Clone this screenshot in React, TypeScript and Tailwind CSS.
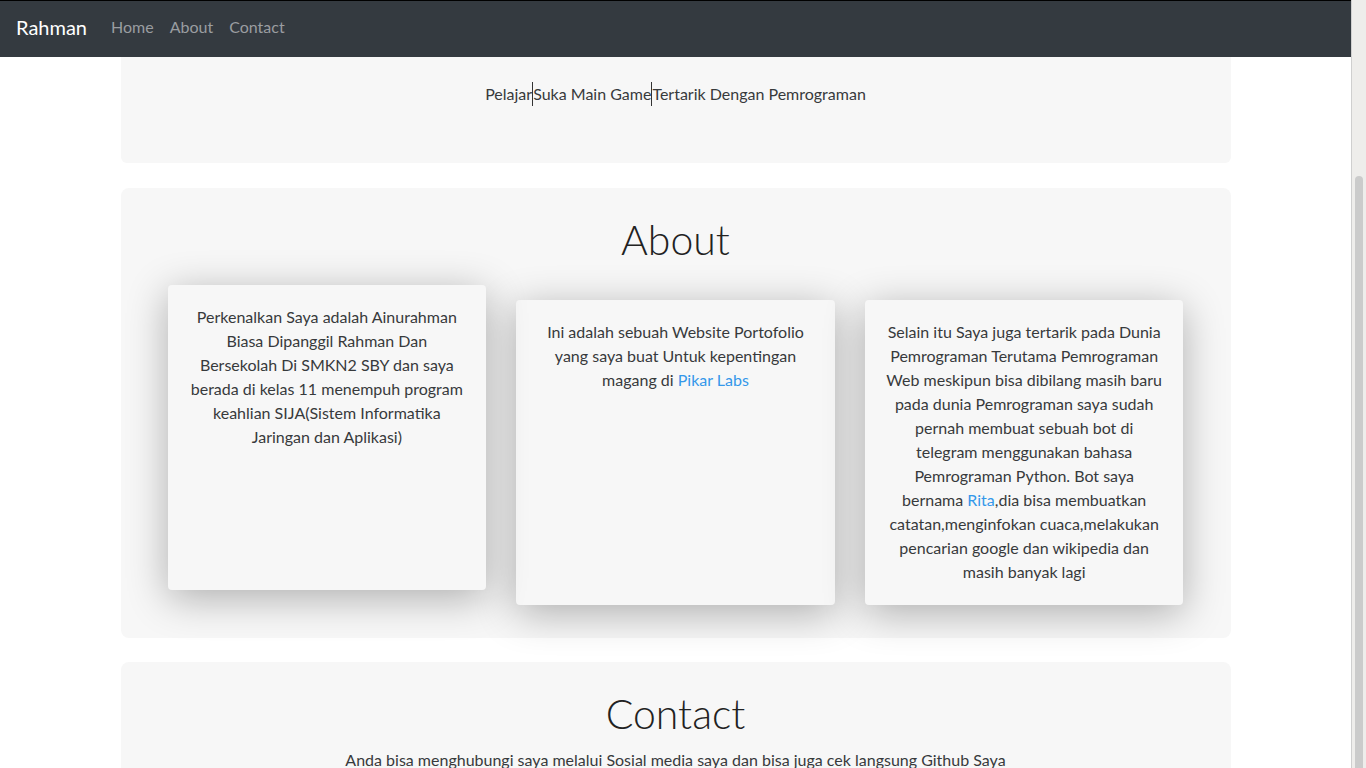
export default function App() {
  const font = { fontFamily: 'Lato, "Open Sans", sans-serif' };
  return (
    <div className="min-h-screen bg-white text-[#373a3c] pr-[15px]" style={font}>
      {/* Navbar */}
      <header className="fixed top-0 left-0 right-[15px] z-50 h-[57px] bg-[#343a40] border-t border-black flex items-center px-4 pb-[4px]">
        <a href="#" className="text-[20px] leading-[30px] text-white mr-4">Rahman</a>
        <nav className="flex text-[16px] leading-6">
          <a href="#" className="px-2 text-[#9a9da0]">Home</a>
          <a href="#about" className="px-2 text-[#9a9da0]">About</a>
          <a href="#contact" className="px-2 text-[#9a9da0]">Contact</a>
        </nav>
      </header>

      {/* Scrollbar */}
      <div className="fixed top-0 bottom-0 right-0 z-50 w-[15px] bg-[#eeedeb] border-l border-[#cfcfcf] pt-[176px] px-[3px]">
        <div className="h-full rounded-t-full bg-[#cbcbcb]"></div>
      </div>

      <main className="max-w-[1140px] mx-auto px-[15px]">
        {/* Hero */}
        <section className="bg-[#f7f7f7] rounded-md pt-[82px] pb-[57px] text-center text-[16px] leading-6">
          <span className="inline-block border-r border-[#333]">Pelajar</span>
          <span className="inline-block border-r border-[#333]">Suka Main Game</span>
          <span className="inline-block">Tertarik Dengan Pemrograman</span>
        </section>

        {/* About */}
        <section id="about" className="mt-[25px] bg-[#f7f7f7] rounded-lg pt-[28px] pb-[33px] px-[47px]">
          <h2 className="text-center text-[41px] leading-[48px] font-light text-[#222]">About</h2>
          <div className="grid grid-cols-3 gap-[30px] mt-[36px] text-[16px] leading-6 text-center">
            <div className="bg-[#f7f7f7] rounded px-5 pt-5 pb-[21px] -translate-y-[15px] shadow-[0_8px_40px_rgba(0,0,0,0.3)]">
              Perkenalkan Saya adalah Ainurahman Biasa Dipanggil Rahman Dan Bersekolah Di SMKN2 SBY dan saya berada di kelas 11 menempuh program keahlian SIJA(Sistem Informatika Jaringan dan Aplikasi)
            </div>
            <div className="bg-[#f7f7f7] rounded px-5 pt-5 pb-[21px] shadow-[0_8px_40px_rgba(0,0,0,0.3)]">
              Ini adalah sebuah Website Portofolio yang saya buat Untuk kepentingan magang di{' '}
              <a href="#" className="text-[#3498ea]">Pikar Labs</a>
            </div>
            <div className="bg-[#f7f7f7] rounded px-5 pt-5 pb-[21px] shadow-[0_8px_40px_rgba(0,0,0,0.3)]">
              Selain itu Saya juga tertarik pada Dunia Pemrograman Terutama Pemrograman Web meskipun bisa dibilang masih baru pada dunia Pemrograman saya sudah pernah membuat sebuah bot di telegram menggunakan bahasa Pemrograman Python. Bot saya bernama{' '}
              <a href="#" className="text-[#3498ea]">Rita</a>,dia bisa membuatkan catatan,menginfokan cuaca,melakukan pencarian google dan wikipedia dan masih banyak lagi
            </div>
          </div>
        </section>

        {/* Contact */}
        <section id="contact" className="mt-6 mb-6 bg-[#f7f7f7] rounded-lg pt-[28px] pb-16 px-[47px] text-center">
          <h2 className="text-[41px] leading-[48px] font-light text-[#222]">Contact</h2>
          <p className="mt-[10px] text-[16px] leading-6">
            Anda bisa menghubungi saya melalui Sosial media saya dan bisa juga cek langsung Github Saya
          </p>
        </section>
      </main>
    </div>
  );
}
